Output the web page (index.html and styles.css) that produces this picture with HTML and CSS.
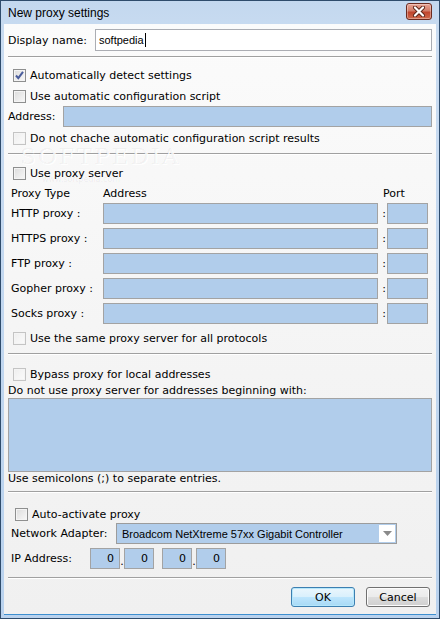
FILE: index.html
```html
<!DOCTYPE html>
<html lang="en">
<head>
  <meta charset="UTF-8">
  <title>New proxy settings</title>
  <link rel="stylesheet" href="styles.css">
</head>
<body>
  <div class="window">
    <div class="titlebar">
      <span class="title">New proxy settings</span>
      <div class="close-btn">
        <svg width="14" height="11" viewBox="0 0 14 11">
          <path d="M3 1.5 L11 9.5 M11 1.5 L3 9.5" stroke="#5a2418" stroke-width="4" stroke-linecap="round"/>
          <path d="M3 1.5 L11 9.5 M11 1.5 L3 9.5" stroke="#fff" stroke-width="2.2" stroke-linecap="round"/>
        </svg>
      </div>
    </div>

    <div class="client">
      <!-- Watermark -->
      <div class="watermark">SOFTPEDIA<span class="tm">™</span></div>
      <div class="watermark-url">www.softpedia.com</div>

      <div class="row display-row">
        <span class="label">Display name:</span>
        <div class="field white-field">softpedia<span class="caret"></span></div>
      </div>

      <div class="sep sep-1"></div>

      <div class="check-row cr-1">
        <span class="checkbox checked">
          <svg width="11" height="11" viewBox="0 0 11 11"><path d="M2 5.5 L4.3 8.2 L9 1.8" fill="none" stroke="#4a5d9c" stroke-width="2"/></svg>
        </span>
        <span>Automatically detect settings</span>
      </div>
      <div class="check-row cr-2">
        <span class="checkbox"></span>
        <span>Use automatic configuration script</span>
      </div>
      <div class="row address-row">
        <span class="label">Address:</span>
        <div class="field blue-field"></div>
      </div>
      <div class="check-row cr-3">
        <span class="checkbox disabled"></span>
        <span>Do not chache automatic configuration script results</span>
      </div>

      <div class="sep sep-2"></div>

      <div class="check-row cr-proxy">
        <span class="checkbox"></span>
        <span>Use proxy server</span>
      </div>

      <div class="proxy-head">
        <span class="col-type">Proxy Type</span>
        <span class="col-addr">Address</span>
        <span class="col-port">Port</span>
      </div>

      <div class="proxy-list">
        <div class="proxy-row">
          <span class="col-type">HTTP proxy :</span>
          <div class="field blue-field addr"></div>
          <span class="colon">:</span>
          <div class="field blue-field port"></div>
        </div>
        <div class="proxy-row">
          <span class="col-type">HTTPS proxy :</span>
          <div class="field blue-field addr"></div>
          <span class="colon">:</span>
          <div class="field blue-field port"></div>
        </div>
        <div class="proxy-row">
          <span class="col-type">FTP proxy :</span>
          <div class="field blue-field addr"></div>
          <span class="colon">:</span>
          <div class="field blue-field port"></div>
        </div>
        <div class="proxy-row">
          <span class="col-type">Gopher proxy :</span>
          <div class="field blue-field addr"></div>
          <span class="colon">:</span>
          <div class="field blue-field port"></div>
        </div>
        <div class="proxy-row">
          <span class="col-type">Socks proxy :</span>
          <div class="field blue-field addr"></div>
          <span class="colon">:</span>
          <div class="field blue-field port"></div>
        </div>
      </div>

      <div class="check-row cr-same">
        <span class="checkbox disabled"></span>
        <span>Use the same proxy server for all protocols</span>
      </div>

      <div class="sep sep-3"></div>

      <div class="check-row cr-bypass">
        <span class="checkbox disabled"></span>
        <span>Bypass proxy for local addresses</span>
      </div>
      <div class="text-line">Do not use proxy server for addresses beginning with:</div>
      <div class="field blue-field bypass-box"></div>
      <div class="text-line hint">Use semicolons (;) to separate entries.</div>

      <div class="sep sep-4"></div>

      <div class="check-row cr-auto">
        <span class="checkbox"></span>
        <span>Auto-activate proxy</span>
      </div>
      <div class="row adapter-row">
        <span class="label">Network Adapter:</span>
        <div class="select">
          <span class="select-text">Broadcom NetXtreme 57xx Gigabit Controller</span>
          <span class="select-arrow">
            <svg width="9" height="5" viewBox="0 0 9 5"><path d="M0 0 H9 L4.5 5 Z" fill="#8a8a8a"/></svg>
          </span>
        </div>
      </div>
      <div class="row ip-row">
        <span class="label">IP Address:</span>
        <div class="ip-fields">
          <div class="field blue-field ip">0</div><span class="dot">.</span>
          <div class="field blue-field ip">0</div>
          <div class="field blue-field ip ip-gap">0</div><span class="dot">.</span>
          <div class="field blue-field ip">0</div>
        </div>
      </div>

      <div class="sep sep-5"></div>

      <div class="buttons">
        <div class="btn btn-ok">OK</div>
        <div class="btn btn-cancel">Cancel</div>
      </div>
    </div>
  </div>
</body>
</html>
```

FILE: styles.css
```css
/* Reset */
* {
  margin: 0;
  padding: 0;
  box-sizing: border-box;
}
:root {
  --field-blue: #b1cdeb;
  --field-border: #a3a3a3;
  --text: #000;
  --sep-dark: #a0a0a0;
}
body {
  width: 440px;
  height: 619px;
  overflow: hidden;
  font-family: "DejaVu Sans", Verdana, sans-serif;
  font-size: 11px;
  color: var(--text);
  background: #fff;
}

/* Window frame */
.window {
  width: 440px;
  height: 619px;
  border: 1px solid #2f4c6c;
  background: linear-gradient(to bottom, #c3d8ef, #cadcf1 40px, #b9d2ee);
  display: flex;
  flex-direction: column;
}
.titlebar {
  height: 23px;
  display: flex;
  align-items: center;
  justify-content: space-between;
  padding: 0 7px 0 7px;
}
.title {
  font-family: "Liberation Sans", Arial, sans-serif;
  font-size: 12px;
  color: #000;
  padding-top: 1px;
}
.close-btn {
  width: 26px;
  height: 17px;
  margin-top: -3px;
  border: 1px solid #6b2a1f;
  border-radius: 3px;
  background: linear-gradient(to bottom, #e8a394, #d27c68 45%, #c0452d 55%, #cf6a4d);
  box-shadow: inset 0 0 0 1px rgba(255,255,255,0.35);
  display: flex;
  align-items: center;
  justify-content: center;
}

/* Client area */
.client {
  position: relative;
  flex: 1;
  margin: 0 3px 3px 3px;
  border-bottom: 1px solid #3d8fd0;
  background: linear-gradient(to bottom, #fbfbfb, #f4f4f4 350px, #f0f0f0);
  padding: 0 4px;
  display: flex;
  flex-direction: column;
}

.watermark {
  position: absolute;
  left: 16px;
  top: 119px;
  font-family: "DejaVu Serif", serif;
  font-size: 23px;
  letter-spacing: 2px;
  color: rgba(0,0,0,0.055);
  text-shadow: 1px 1px 0 rgba(255,255,255,0.9);
  pointer-events: none;
}
.watermark .tm {
  font-size: 8px;
  vertical-align: top;
}
.watermark-url {
  position: absolute;
  left: 38px;
  top: 151px;
  font-size: 8px;
  color: rgba(0,0,0,0.06);
  pointer-events: none;
}

.row {
  display: flex;
  align-items: center;
}
.label {
  white-space: nowrap;
}
.field {
  border: 1px solid var(--field-border);
}
.white-field {
  flex: 1;
  height: 22px;
  background: #fff;
  border-color: #abadb3;
  font-family: "Liberation Sans", Tahoma, sans-serif;
  font-size: 11px;
  display: flex;
  align-items: center;
  padding-left: 3px;
}
.caret {
  display: inline-block;
  width: 1px;
  height: 14px;
  background: #000;
  margin-left: 1px;
}
.blue-field {
  background: var(--field-blue);
}

/* Separators */
.sep {
  height: 2px;
  border-top: 1px solid var(--sep-dark);
  border-bottom: 1px solid #fff;
}

.display-row {
  margin-top: 5px;
  height: 22px;
}
.display-row .label {
  width: 87px;
}
.sep-1 { margin-top: 5px; }

/* Checkbox rows */
.check-row {
  display: flex;
  align-items: center;
  height: 20px;
  padding-left: 5px;
  gap: 4px;
}
.checkbox {
  width: 13px;
  height: 13px;
  border: 1px solid #8e8f8f;
  background: linear-gradient(135deg, #dcdcdc, #f8f8f8);
  box-shadow: inset 0 0 0 1px #f4f4f4;
  display: flex;
  align-items: center;
  justify-content: center;
  flex-shrink: 0;
}
.checkbox.disabled {
  border-color: #c4c4c4;
  background: linear-gradient(135deg, #eeeeee, #fbfbfb);
}
.cr-1 { margin-top: 7px; }
.cr-2 { margin-top: 1px; }

.address-row {
  height: 21px;
}
.address-row .label {
  width: 55px;
}
.address-row .field {
  flex: 1;
  height: 21px;
}
.cr-3 { margin-top: 1px; }
.sep-2 { margin-top: 5px; }
.cr-proxy { margin-top: 8px; }

/* Proxy table */
.proxy-head {
  display: flex;
  align-items: center;
  height: 18px;
  margin-top: 1px;
}
.col-type {
  width: 95px;
  padding-left: 3px;
  white-space: nowrap;
  flex-shrink: 0;
}
.col-addr {
  flex: 1;
}
.col-port {
  width: 49px;
}
.proxy-list {
  display: flex;
  flex-direction: column;
  gap: 4px;
  margin-top: 1px;
}
.proxy-row {
  display: flex;
  align-items: center;
  height: 21px;
  padding-right: 4px;
}
.proxy-row .addr {
  flex: 1;
  height: 21px;
}
.colon {
  width: 9px;
  text-align: center;
  padding-left: 3px;
}
.proxy-row .port {
  width: 41px;
  height: 21px;
}
.cr-same { margin-top: 4px; }
.sep-3 { margin-top: 5px; }

/* Bypass */
.cr-bypass {
  margin-top: 10px;
  height: 19px;
}
.text-line {
  height: 14px;
  line-height: 14px;
  white-space: nowrap;
}
.bypass-box {
  height: 74px;
}
.hint {
  height: 15px;
}
.sep-4 { margin-top: 4px; }

/* Auto activation */
.cr-auto {
  margin-top: 13px;
  height: 17px;
  padding-left: 7px;
}
.adapter-row {
  height: 21px;
  padding-left: 3px;
}
.adapter-row .label {
  width: 105px;
}
.select {
  width: 281px;
  height: 21px;
  border: 1px solid #9c9c9c;
  background: var(--field-blue);
  display: flex;
  align-items: center;
  justify-content: space-between;
}
.select-text {
  font-family: "Liberation Sans", Tahoma, sans-serif;
  font-size: 11px;
  padding-left: 5px;
  white-space: nowrap;
}
.select-arrow {
  width: 16px;
  height: 17px;
  margin-right: 1px;
  background: #fff;
  display: flex;
  align-items: center;
  justify-content: center;
}
.ip-row {
  height: 21px;
  margin-top: 4px;
  padding-left: 3px;
}
.ip-row .label {
  width: 79px;
}
.ip-fields {
  display: flex;
  align-items: flex-end;
}
.ip {
  width: 30px;
  height: 21px;
  text-align: right;
  padding-right: 5px;
  line-height: 19px;
}
.ip-gap {
  margin-left: 8px;
}
.dot {
  width: 4px;
  text-align: center;
  line-height: 14px;
}
.sep-5 { margin-top: 8px; }

/* Dialog buttons */
.buttons {
  display: flex;
  justify-content: flex-end;
  gap: 11px;
  margin-top: 8px;
  padding-right: 2px;
}
.btn {
  width: 64px;
  height: 20px;
  border-radius: 3px;
  display: flex;
  align-items: center;
  justify-content: center;
}
.btn-ok {
  border: 1px solid #3c7fb1;
  background: linear-gradient(to bottom, #eaf6fd, #d9f0fc 50%, #bee6fd 50%, #a7d9f5);
  box-shadow: inset 0 0 0 1px #b5e7fb;
}
.btn-cancel {
  border: 1px solid #707070;
  background: linear-gradient(to bottom, #f2f2f2, #ebebeb 50%, #dddddd 50%, #cfcfcf);
  box-shadow: inset 0 0 0 1px #fcfcfc;
}
```
